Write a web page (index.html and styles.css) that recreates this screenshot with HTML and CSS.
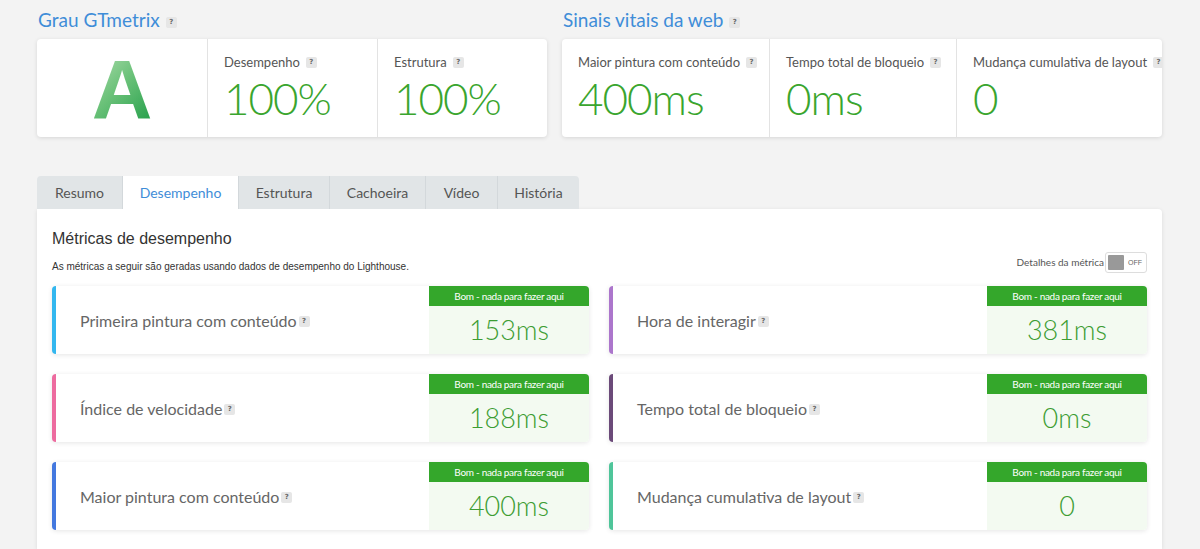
FILE: index.html
```html
<!DOCTYPE html>
<html lang="pt">
<head>
<meta charset="utf-8">
<title>GTmetrix</title>
<link rel="stylesheet" href="styles.css">
</head>
<body>
<div class="page">
  <div class="top">
    <section class="grade-block">
      <h2 class="block-title">Grau GTmetrix <span class="q">?</span></h2>
      <div class="card">
        <div class="cell grade-cell"><span class="grade">A</span></div>
        <div class="cell">
          <div class="cell-label">Desempenho <span class="q">?</span></div>
          <div class="cell-value">100%</div>
        </div>
        <div class="cell">
          <div class="cell-label">Estrutura <span class="q">?</span></div>
          <div class="cell-value">100%</div>
        </div>
      </div>
    </section>
    <section class="vitals-block">
      <h2 class="block-title">Sinais vitais da web <span class="q">?</span></h2>
      <div class="card">
        <div class="cell vcell-1">
          <div class="cell-label">Maior pintura com conteúdo <span class="q">?</span></div>
          <div class="cell-value">400ms</div>
        </div>
        <div class="cell vcell-2">
          <div class="cell-label">Tempo total de bloqueio <span class="q">?</span></div>
          <div class="cell-value">0ms</div>
        </div>
        <div class="cell vcell-3">
          <div class="cell-label">Mudança cumulativa de layout <span class="q">?</span></div>
          <div class="cell-value">0</div>
        </div>
      </div>
    </section>
  </div>

  <nav class="tabs">
    <span class="tab tab-first">Resumo</span>
    <span class="tab active">Desempenho</span>
    <span class="tab">Estrutura</span>
    <span class="tab">Cachoeira</span>
    <span class="tab">Vídeo</span>
    <span class="tab tab-last">História</span>
  </nav>

  <main class="panel">
    <h3 class="panel-title">Métricas de desempenho</h3>
    <div class="panel-sub">
      <p class="panel-desc">As métricas a seguir são geradas usando dados de desempenho do Lighthouse.</p>
      <div class="toggle-wrap">
        <span class="toggle-label">Detalhes da métrica</span>
        <span class="toggle"><span class="knob"></span><span class="off">OFF</span></span>
      </div>
    </div>
    <div class="metrics">
      <div class="metric c-fcp">
        <div class="metric-name">Primeira pintura com conteúdo<span class="q">?</span></div>
        <div class="metric-score"><div class="score-head">Bom - nada para fazer aqui</div><div class="score-val">153ms</div></div>
      </div>
      <div class="metric c-tti">
        <div class="metric-name">Hora de interagir<span class="q">?</span></div>
        <div class="metric-score"><div class="score-head">Bom - nada para fazer aqui</div><div class="score-val">381ms</div></div>
      </div>
      <div class="metric c-si">
        <div class="metric-name">Índice de velocidade<span class="q">?</span></div>
        <div class="metric-score"><div class="score-head">Bom - nada para fazer aqui</div><div class="score-val">188ms</div></div>
      </div>
      <div class="metric c-tbt">
        <div class="metric-name">Tempo total de bloqueio<span class="q">?</span></div>
        <div class="metric-score"><div class="score-head">Bom - nada para fazer aqui</div><div class="score-val">0ms</div></div>
      </div>
      <div class="metric c-lcp">
        <div class="metric-name">Maior pintura com conteúdo<span class="q">?</span></div>
        <div class="metric-score"><div class="score-head">Bom - nada para fazer aqui</div><div class="score-val">400ms</div></div>
      </div>
      <div class="metric c-cls">
        <div class="metric-name">Mudança cumulativa de layout<span class="q">?</span></div>
        <div class="metric-score"><div class="score-head">Bom - nada para fazer aqui</div><div class="score-val">0</div></div>
      </div>
    </div>
  </main>
</div>
</body>
</html>
```

FILE: styles.css
```css
* { box-sizing: border-box; }
html, body { margin: 0; padding: 0; }
body {
  background: #f3f3f3;
  font-family: Lato, "Open Sans", sans-serif;
  color: #555;
  height: 549px;
  overflow: hidden;
}
.page {
  width: 1125px;
  margin-left: 37px;
  padding-top: 9px;
}
.top {
  display: flex;
  gap: 15px;
}
.grade-block { width: 510px; }
.vitals-block { width: 600px; }
.block-title {
  margin: 0 0 8px 1px;
  font-weight: 400;
  font-size: 19px;
  line-height: 22px;
  color: #3f8dd8;
  display: flex;
  align-items: center;
  gap: 3px;
}
.q {
  display: inline-flex;
  align-items: center;
  justify-content: center;
  flex: none;
  width: 11px;
  height: 11px;
  background: #e6e6e6;
  border-radius: 2px;
  font-family: "DejaVu Sans", sans-serif;
  font-weight: 700;
  font-size: 7px;
  color: #666;
  vertical-align: middle;
  margin-left: 3px;
  line-height: 1;
}
.block-title .q { margin-top: 4px; }
.card {
  display: flex;
  height: 98px;
  background: #fff;
  border-radius: 4px;
  box-shadow: 0 1px 4px rgba(0,0,0,0.12);
}
.cell {
  width: 170px;
  padding: 16px 0 0 16px;
  border-left: 1px solid #e3e3e3;
  overflow: hidden;
}
.cell:first-child { border-left: none; }
.grade-cell {
  display: flex;
  align-items: center;
  justify-content: center;
  padding: 0;
}
.grade {
  font-family: "Liberation Sans", Arial, sans-serif;
  font-weight: 700;
  font-size: 84px;
  line-height: 1;
  background: linear-gradient(135deg, #b6e0b4 0%, #6cc27a 45%, #1a9a43 100%);
  -webkit-background-clip: text;
  background-clip: text;
  color: transparent;
  margin-top: 4px;
}
.cell-label {
  font-size: 13px;
  line-height: 15px;
  color: #555;
  display: flex;
  align-items: center;
  white-space: nowrap;
}
.cell-label .q { margin-left: 6px; }
.cell-value {
  font-weight: 300;
  font-size: 44px;
  line-height: 50px;
  color: #3aa52e;
  margin-top: 3px;
  letter-spacing: -1px;
}
.vcell-1 { width: 207px; }
.vcell-2 { width: 187px; }
.vcell-3 { width: 206px; }

.tabs {
  display: flex;
  margin-top: 39px;
  height: 33px;
}
.tab {
  display: flex;
  align-items: center;
  justify-content: center;
  padding: 0 19px;
  background: #e1e5e7;
  border-right: 1px solid #d3d8db;
  font-size: 14px;
  color: #555;
}
.tab-first { border-top-left-radius: 4px; width: 86px; }
.tab-last { border-top-right-radius: 4px; border-right: none; width: 81px; }
.tab.active { background: #fff; color: #3f8dd8; width: 116px; }
.tab:nth-child(3) { width: 91px; }
.tab:nth-child(4) { width: 96px; }
.tab:nth-child(5) { width: 72px; }

.panel {
  background: #fff;
  box-shadow: 0 1px 4px rgba(0,0,0,0.1);
  border-radius: 0 4px 0 0;
  padding: 20px 15px 30px 15px;
  height: 340px;
}
.panel-title {
  margin: 0;
  font-family: "Liberation Sans", Arial, sans-serif;
  font-weight: 400;
  font-size: 16px;
  line-height: 20px;
  color: #333;
}
.panel-sub {
  display: flex;
  justify-content: space-between;
  align-items: center;
  height: 26px;
}
.panel-desc {
  margin: 0;
  font-family: "Liberation Sans", Arial, sans-serif;
  font-size: 10px;
  color: #333;
  padding-top: 9px;
}
.toggle-wrap {
  display: flex;
  align-items: center;
}
.toggle-label {
  font-size: 10px;
  color: #555;
  margin-right: 1px;
}
.toggle {
  display: flex;
  align-items: center;
  width: 42px;
  height: 21px;
  border: 1px solid #ddd;
  border-radius: 3px;
  padding: 2px;
}
.knob {
  width: 16px;
  height: 15px;
  background: #999;
  border-radius: 1px;
}
.off {
  font-family: "Liberation Sans", Arial, sans-serif;
  font-size: 7px;
  color: #666;
  margin-left: 4px;
}
.metrics {
  display: grid;
  grid-template-columns: 537px 538px;
  gap: 20px 20px;
  margin-top: 11px;
}
.metric {
  height: 68px;
  display: flex;
  background: #fff;
  border-radius: 4px;
  box-shadow: 0 1px 5px rgba(0,0,0,0.1);
  border-left: 4px solid #3bb8f0;
}
.c-fcp { border-left-color: #33b7ef; }
.c-si { border-left-color: #ed6b9f; }
.c-lcp { border-left-color: #4378df; }
.c-tti { border-left-color: #ac76cc; }
.c-tbt { border-left-color: #6b4a79; }
.c-cls { border-left-color: #4fc59a; }
.metric-name {
  flex: 1;
  display: flex;
  align-items: center;
  padding-left: 24px;
  font-size: 16px;
  color: #666;
}
.metric-name .q { margin-left: 2px; margin-top: 3px; }
.metric-score {
  width: 160px;
  display: flex;
  flex-direction: column;
  background: #f3faf1;
  border-radius: 0 4px 4px 0;
  overflow: hidden;
}
.score-head {
  height: 20px;
  background: #34a72b;
  color: #fff;
  font-size: 10px;
  display: flex;
  align-items: center;
  justify-content: center;
  letter-spacing: -0.3px;
}
.score-val {
  flex: 1;
  display: flex;
  align-items: center;
  justify-content: center;
  font-weight: 300;
  font-size: 27px;
  color: #3c9d33;
  padding-bottom: 2px;
}
```
